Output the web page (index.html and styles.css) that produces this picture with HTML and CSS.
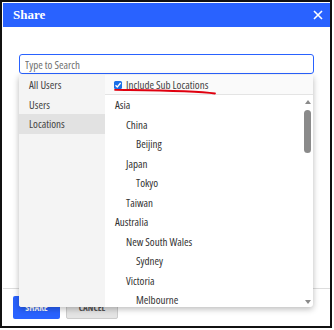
FILE: index.html
```html
<!DOCTYPE html>
<html lang="en">
<head>
    <meta charset="UTF-8">
    <meta name="viewport" content="width=device-width, initial-scale=1.0">
    <title>Share</title>
    <link rel="stylesheet" href="styles.css">
</head>
<body>
    <div class="frame">
        <div class="dialog">
            <div class="dialog-header">
                <span class="title">Share</span>
                <svg class="close" width="10" height="10" viewBox="0 0 10 10">
                    <path d="M1 1 L9 9 M9 1 L1 9" stroke="#fff" stroke-width="1.6" fill="none"/>
                </svg>
            </div>

            <div class="dialog-body">
                <div class="search-wrap">
                    <input type="text" class="search" placeholder="Type to Search">

                    <div class="picker">
                        <ul class="picker-tabs">
                            <li>All Users</li>
                            <li>Users</li>
                            <li class="active">Locations</li>
                        </ul>
                        <div class="picker-main">
                            <div class="picker-head">
                                <span class="check">
                                    <svg width="8" height="8" viewBox="0 0 8 8">
                                        <path d="M1.5 4.2 L3.3 6 L6.6 2" stroke="#fff" stroke-width="1.3" fill="none"/>
                                    </svg>
                                </span>
                                Include Sub Locations
                                <svg class="mark" width="110" height="8" viewBox="0 0 110 8">
                                    <path d="M1 1.8 C40 2.4 80 2.6 101 5.5" stroke="#e0000f" stroke-width="1.8" fill="none" stroke-linecap="round"/>
                                </svg>
                            </div>
                            <div class="picker-scroll">
                                <ul class="tree">
                                    <li class="lvl0">Asia</li>
                                    <li class="lvl1">China</li>
                                    <li class="lvl2">Beijing</li>
                                    <li class="lvl1">Japan</li>
                                    <li class="lvl2">Tokyo</li>
                                    <li class="lvl1">Taiwan</li>
                                    <li class="lvl0">Australia</li>
                                    <li class="lvl1">New South Wales</li>
                                    <li class="lvl2">Sydney</li>
                                    <li class="lvl1">Victoria</li>
                                    <li class="lvl2">Melbourne</li>
                                </ul>
                                <div class="scrollbar">
                                    <span class="arrow-up"></span>
                                    <span class="thumb"></span>
                                    <span class="arrow-down"></span>
                                </div>
                            </div>
                        </div>
                    </div>
                </div>
            </div>

            <div class="dialog-footer">
                <button class="btn btn-primary">SHARE</button>
                <button class="btn btn-default">CANCEL</button>
            </div>
        </div>
    </div>
</body>
</html>
```

FILE: styles.css
```css
body { margin: 0; background: #fff; font-family: "Open Sans", Roboto, sans-serif; font-stretch: 75%; font-size: 11px; color: #333; }
.frame { width: 332px; height: 328px; box-sizing: border-box; border: 2px solid #111; padding: 1px 0 0 1px; }
.dialog { height: 323px; display: flex; flex-direction: column; background: #fff; }

.dialog-header { height: 24px; flex: none; background: #2962ff; display: flex; align-items: center; justify-content: space-between; padding: 0 7px 0 10px; }
.title { font-family: "Liberation Serif", serif; font-weight: bold; font-size: 13px; color: #fff; font-stretch: normal; }
.close { display: block; }

.dialog-body { flex: 1; padding: 27px 16px 0 16px; }
.search-wrap { position: relative; }
.search { display: block; width: 100%; height: 20px; box-sizing: border-box; border: 1px solid #2962ff; border-radius: 3px; padding: 0 5px; font: inherit; font-stretch: 75%; color: #333; outline: none; }
.search::placeholder { color: #707070; }

.picker { position: absolute; top: 21px; left: 0; width: 294px; height: 232px; display: flex; background: #fff; box-shadow: 0 2px 6px rgba(0,0,0,0.28); border-radius: 0 0 3px 3px; overflow: hidden; z-index: 2; }
.picker-tabs { list-style: none; margin: 0; padding: 0; width: 86px; background: #f4f4f4; }
.picker-tabs li { height: 19.5px; line-height: 19.5px; padding-left: 10px; color: #444; }
.picker-tabs li.active { background: #e2e2e2; }

.picker-main { flex: 1; display: flex; flex-direction: column; }
.picker-head { position: relative; height: 19px; flex: none; display: flex; align-items: center; gap: 4px; padding-left: 9px; background: #fafafa; border-bottom: 1px solid #e4e4e4; color: #444; }
.check { width: 8px; height: 8px; border-radius: 1.5px; background: #1a6fe8; display: flex; }
.mark { position: absolute; left: 9px; top: 13px; }

.picker-scroll { flex: 1; display: flex; min-height: 0; }
.tree { list-style: none; margin: 0; padding: 0; flex: 1; }
.tree li { height: 19.5px; line-height: 19.5px; color: #333; }
.tree .lvl0 { padding-left: 10px; }
.tree .lvl1 { padding-left: 21px; }
.tree .lvl2 { padding-left: 31px; }

.scrollbar { width: 11px; display: flex; flex-direction: column; align-items: center; padding: 5px 0 3px; box-sizing: border-box; }
.arrow-up, .arrow-down { width: 0; height: 0; border-left: 3.5px solid transparent; border-right: 3.5px solid transparent; }
.arrow-up { border-bottom: 4.5px solid #8a8a8a; }
.arrow-down { border-top: 4.5px solid #8a8a8a; margin-top: auto; }
.thumb { width: 7px; height: 43px; margin-top: 6px; border-radius: 3.5px; background: #8a8a8a; }

.dialog-footer { height: 38px; flex: none; box-sizing: border-box; border-top: 1px solid #ddd; padding: 7px 10px; display: flex; gap: 6px; }
.btn { height: 23px; border-radius: 2px; font-family: "Open Sans", sans-serif; font-stretch: 75%; font-size: 9px; font-weight: bold; padding: 0; }
.btn-primary { width: 47px; background: #2962ff; color: #fff; border: none; }
.btn-default { width: 52px; background: #e4e4e4; color: #555; border: 1px solid #ccc; }
```
